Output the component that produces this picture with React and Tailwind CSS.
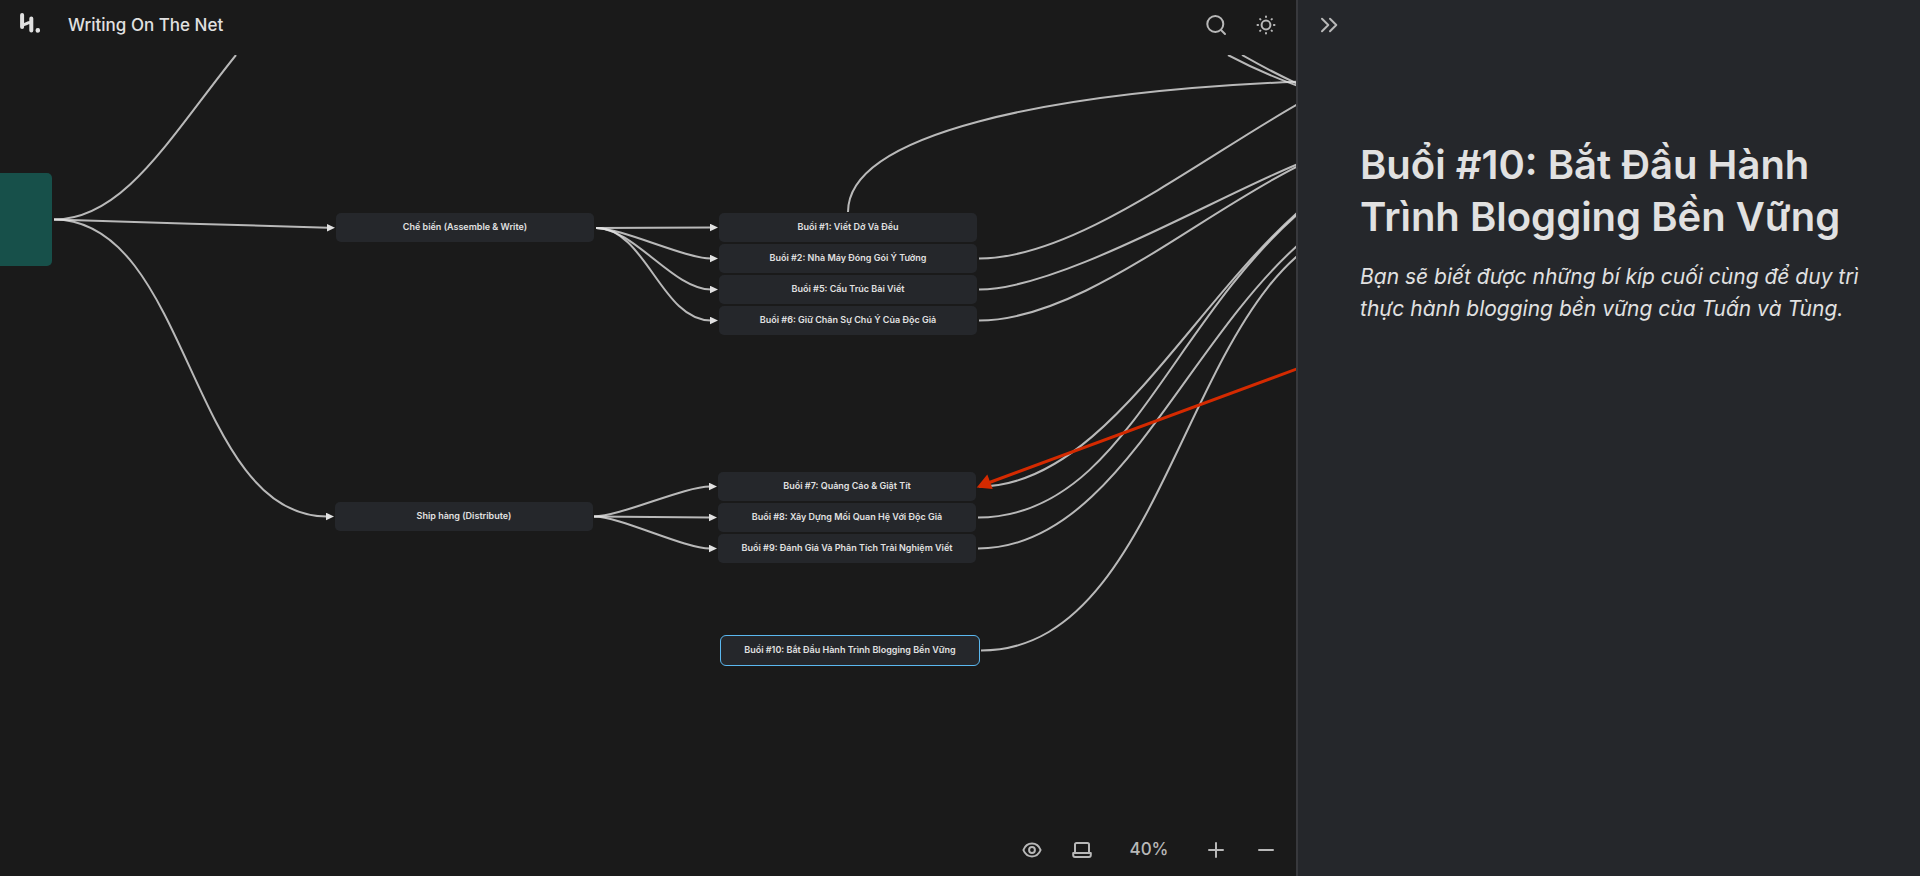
const nodes = [
  { x: 336, y: 158, label: "Chế biến (Assemble & Write)" },
  { x: 335, y: 447, label: "Ship hàng (Distribute)" },
  { x: 719, y: 158, label: "Buổi #1: Viết Dở Và Đều" },
  { x: 719, y: 189, label: "Buổi #2: Nhà Máy Đóng Gói Ý Tưởng" },
  { x: 719, y: 220, label: "Buổi #5: Cấu Trúc Bài Viết" },
  { x: 719, y: 251, label: "Buổi #6: Giữ Chân Sự Chú Ý Của Độc Giả" },
  { x: 718, y: 417, label: "Buổi #7: Quảng Cáo & Giật Tít" },
  { x: 718, y: 448, label: "Buổi #8: Xây Dựng Mối Quan Hệ Với Độc Giả" },
  { x: 718, y: 479, label: "Buổi #9: Đánh Giá Và Phân Tích Trải Nghiệm Viết" },
  { x: 720, y: 580, label: "Buổi #10: Bắt Đầu Hành Trình Blogging Bền Vững", selected: true },
];

const arrows = [
  "M54 219.5C68 219.5 314 227.8 328 227.8",
  "M54 219.5C190 219.5 190 516.5 327 516.5",
  "M596 228C606 228 701 227.5 711 227.5",
  "M596 228C622 228 685 258.5 711 258.5",
  "M596 228C634 228 673 289.5 711 289.5",
  "M596 228C646 228 661 320.5 711 320.5",
  "M594 516.5C620 516.5 684 486.5 710 486.5",
  "M594 516.5C604 516.5 700 517.5 710 517.5",
  "M594 516.5C620 516.5 684 548.5 710 548.5",
];

const lines = [
  "M54 219.5C124 219.5 170 137 236 55",
  "M848 212C848 134 1046 92 1300 81.5",
  "M979 258.5C1074 258.5 1196 162 1298 104",
  "M979 289.5C1059 289.5 1214 198 1298 164",
  "M979 320.5C1079 320.5 1196 217 1298 166",
  "M979 486.5C1101 486.5 1186 312 1298 212",
  "M978 517.5C1121 517.5 1166 330 1298 214",
  "M978 548.5C1114 548.5 1181 350 1298 245",
  "M981 650.5C1185 650.5 1185 220 1389 220",
  "M1228 55Q1262 73 1298 86",
  "M1242 55Q1270 71 1298 84",
];

function Logo() {
  return (
    <svg viewBox="0 0 20 20" className="size-5" fill="none" stroke="#e1e1e1" aria-hidden="true">
      <path d="M2.1 2.1v12M11.3 5.5v12" strokeWidth="4" strokeLinecap="round" />
      <path d="M2 11.8C6 11.8 6 9.6 11 9.6" strokeWidth="3" />
      <circle cx="17.8" cy="17.4" r="2.3" fill="#e1e1e1" stroke="none" />
    </svg>
  );
}

function IconButton({ label, children }) {
  return (
    <button type="button" aria-label={label} className="flex size-[50px] items-center justify-center">
      <svg
        viewBox="0 0 24 24"
        className="size-6"
        fill="none"
        stroke="currentColor"
        strokeWidth="2"
        strokeLinecap="round"
        strokeLinejoin="round"
        aria-hidden="true"
      >
        {children}
      </svg>
    </button>
  );
}

function Board() {
  return (
    <div className="relative flex-1 overflow-hidden">
      <svg className="absolute inset-0 size-full" aria-hidden="true">
        <defs>
          <marker id="tip" markerUnits="userSpaceOnUse" markerWidth="8" markerHeight="8" refX="1" refY="4" orient="auto">
            <path d="M0 0.2L8 4L0 7.8Z" fill="#e1e1e1" />
          </marker>
        </defs>
        <g transform="translate(0 -55)" fill="none" stroke="#e1e1e1" strokeOpacity="0.8" strokeWidth="2">
          {arrows.map((d) => (
            <path key={d} d={d} markerEnd="url(#tip)" />
          ))}
          {lines.map((d) => (
            <path key={d} d={d} />
          ))}
          <path d="M988 483L1298 368.5" stroke="#d42a00" strokeOpacity="1" strokeWidth="3" />
          <path d="M976.7 487.5L987.3 474.5L992.7 489Z" fill="#d42a00" stroke="none" />
        </g>
      </svg>
      <div className="absolute -left-4 top-[118px] h-[93px] w-[68px] rounded-[5px] bg-[#17504a]" />
      {nodes.map((n) => (
        <div
          key={n.label}
          style={{ left: n.x, top: n.y }}
          className={
            n.selected
              ? "absolute flex h-[31px] w-[260px] items-center justify-center rounded-md border border-[#5bb8f0] bg-[#25272b] pb-px text-[9px] font-semibold whitespace-nowrap"
              : "absolute flex h-[29px] w-[258px] items-center justify-center rounded-[5px] bg-[#25272b] pb-px text-[9px] font-semibold whitespace-nowrap"
          }
        >
          {n.label}
        </div>
      ))}
      <div className="absolute right-[5px] bottom-0 flex h-[53px] items-center text-[#b8b8b8]">
        <IconButton label="Preview">
          <path d="M3.4 12C5 8 8.2 5.6 12 5.6S19 8 20.6 12C19 16 15.8 18.4 12 18.4S5 16 3.4 12Z" />
          <circle cx="12" cy="12" r="2.9" />
        </IconButton>
        <IconButton label="Present">
          <path d="M5 15V6.5Q5 5 6.5 5H17.5Q19 5 19 6.5V15" />
          <path d="M3.2 15H20.8V17Q20.8 19 19 19H5Q3.2 19 3.2 17Z" />
        </IconButton>
        <span className="w-[84px] text-center text-[17px] font-medium">40%</span>
        <IconButton label="Zoom in"><path d="M12 5v14M5 12h14" /></IconButton>
        <IconButton label="Zoom out"><path d="M5 12h14" /></IconButton>
      </div>
    </div>
  );
}

export default function App() {
  return (
    <div className="flex min-h-screen bg-[#1a1a1a] font-['Inter',sans-serif] text-[#e1e1e1]">
      <main className="flex min-w-0 flex-1 flex-col">
        <header className="flex h-[55px] items-center pr-[5px] pb-[5px] pl-5">
          <a href="#" aria-label="Home" className="-mt-1"><Logo /></a>
          <h1 className="ml-7 flex-1 pt-0.5 text-[17px] font-medium">Writing On The Net</h1>
          <div className="flex text-[#b8b8b8]">
            <IconButton label="Search">
              <circle cx="11.3" cy="11" r="8" />
              <path d="M17 17L21 21" />
            </IconButton>
            <IconButton label="Toggle theme">
              <circle cx="12" cy="12" r="4.4" />
              <path d="M12 3.5v.6M12 19.9v.6M3.5 12h.6M19.9 12h.6M6.1 6.1l.3.3M17.6 17.6l.3.3M6.1 17.9l.3-.3M17.6 6.4l.3-.3" />
            </IconButton>
          </div>
        </header>
        <Board />
      </main>
      <aside className="w-[32.5%] border-l-2 border-[#38393d] bg-[#25272b]">
        <div className="flex h-[50px] items-center pl-1.5 text-[#b8b8b8]">
          <IconButton label="Collapse panel"><path d="M5 5.8L11.3 12L5 18.2M13 5.8L19.3 12L13 18.2" /></IconButton>
        </div>
        <article className="pt-[89px] pr-10 pl-[62px]">
          <h2 className="text-[40px] leading-[52px] font-semibold">Buổi #10: Bắt Đầu Hành Trình Blogging Bền Vững</h2>
          <p className="mt-[18px] text-[21px] leading-8 italic">
            Bạn sẽ biết được những bí kíp cuối cùng để duy trì thực hành blogging bền vững của Tuấn và Tùng.
          </p>
        </article>
      </aside>
    </div>
  );
}
